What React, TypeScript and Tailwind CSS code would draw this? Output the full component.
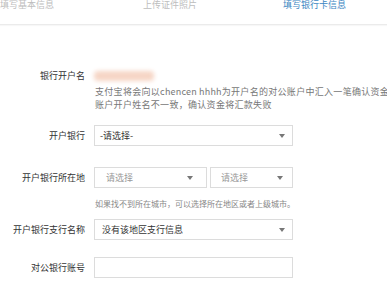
const font = "font-['Microsoft_YaHei','Noto_Sans_CJK_SC',sans-serif]";

function Arrow() {
  return (
    <span className="h-0 w-0 border-x-[3px] border-t-[4px] border-x-transparent border-t-[#777]" />
  );
}

function Select({
  value,
  muted = false,
  className = "",
}: {
  value: string;
  muted?: boolean;
  className?: string;
}) {
  return (
    <div
      className={`flex h-[21px] items-center justify-between border border-[#dcdcdc] bg-white text-[9px] ${className}`}
    >
      <span className={muted ? "text-[#9a9a9a]" : "text-[#333]"}>{value}</span>
      <Arrow />
    </div>
  );
}

function Row({ label, children, className = "" }: { label: string; children: React.ReactNode; className?: string }) {
  return (
    <div className={`flex items-center ${className}`}>
      <div className="w-[86px] shrink-0 pr-[1px] text-right text-[9px] leading-[13px] text-[#333]">
        {label}
      </div>
      <div className="ml-[8px] flex-1">{children}</div>
    </div>
  );
}

export default function App() {
  return (
    <div className={`h-[303px] w-[387px] overflow-hidden bg-white ${font}`}>
      <div className="-mt-[1px] flex h-[26px] items-start border-b border-[#ebebeb] text-[9px] leading-[12px] shadow-[0_1px_1px_rgba(0,0,0,0.03)]">
        <span className="text-[#bdbdbd]">填写基本信息</span>
        <span className="ml-[89px] text-[#bdbdbd]">上传证件照片</span>
        <span className="ml-[86px] text-[#3c86c2]">填写银行卡信息</span>
      </div>

      <div className="pt-[44px]">
        <Row label="银行开户名">
          <div className="h-[10px] w-[60px] rounded-sm bg-[#f6d6c6] blur-[2px]" />
        </Row>
        <div className="ml-[95px] mt-[3px] whitespace-nowrap text-[9px] leading-[13px] tracking-[0.3px] text-[#777]">
          <div>
            支付宝将会向以<span className="tracking-[0.2px]">chencen hhhh</span>为开户名的对公账户中汇入一笔确认资金
          </div>
          <div>账户开户姓名不一致，确认资金将汇款失败</div>
        </div>

        <Row label="开户银行" className="mt-[14px]">
          <Select value="-请选择-" className="w-[199px] pl-[5px] pr-[7px]" />
        </Row>

        <Row label="开户银行所在地" className="mt-[21px]">
          <div className="flex gap-[3px]">
            <Select value="请选择" muted className="w-[113px] pl-[11px] pr-[13px]" />
            <Select value="请选择" muted className="w-[83px] pl-[10px] pr-[9px]" />
          </div>
        </Row>
        <div className="ml-[95px] mt-[9px] whitespace-nowrap text-[8px] leading-[13px] text-[#888]">
          如果找不到所在城市，可以选择所在地区或者上级城市。
        </div>

        <Row label="开户银行支行名称" className="mt-[9px]">
          <Select value="没有该地区支行信息" className="w-[199px] pl-[7px] pr-[7px]" />
        </Row>

        <Row label="对公银行账号" className="mt-[17px]">
          <div className="h-[21px] w-[199px] border border-[#dcdcdc] bg-white" />
        </Row>
      </div>
    </div>
  );
}
